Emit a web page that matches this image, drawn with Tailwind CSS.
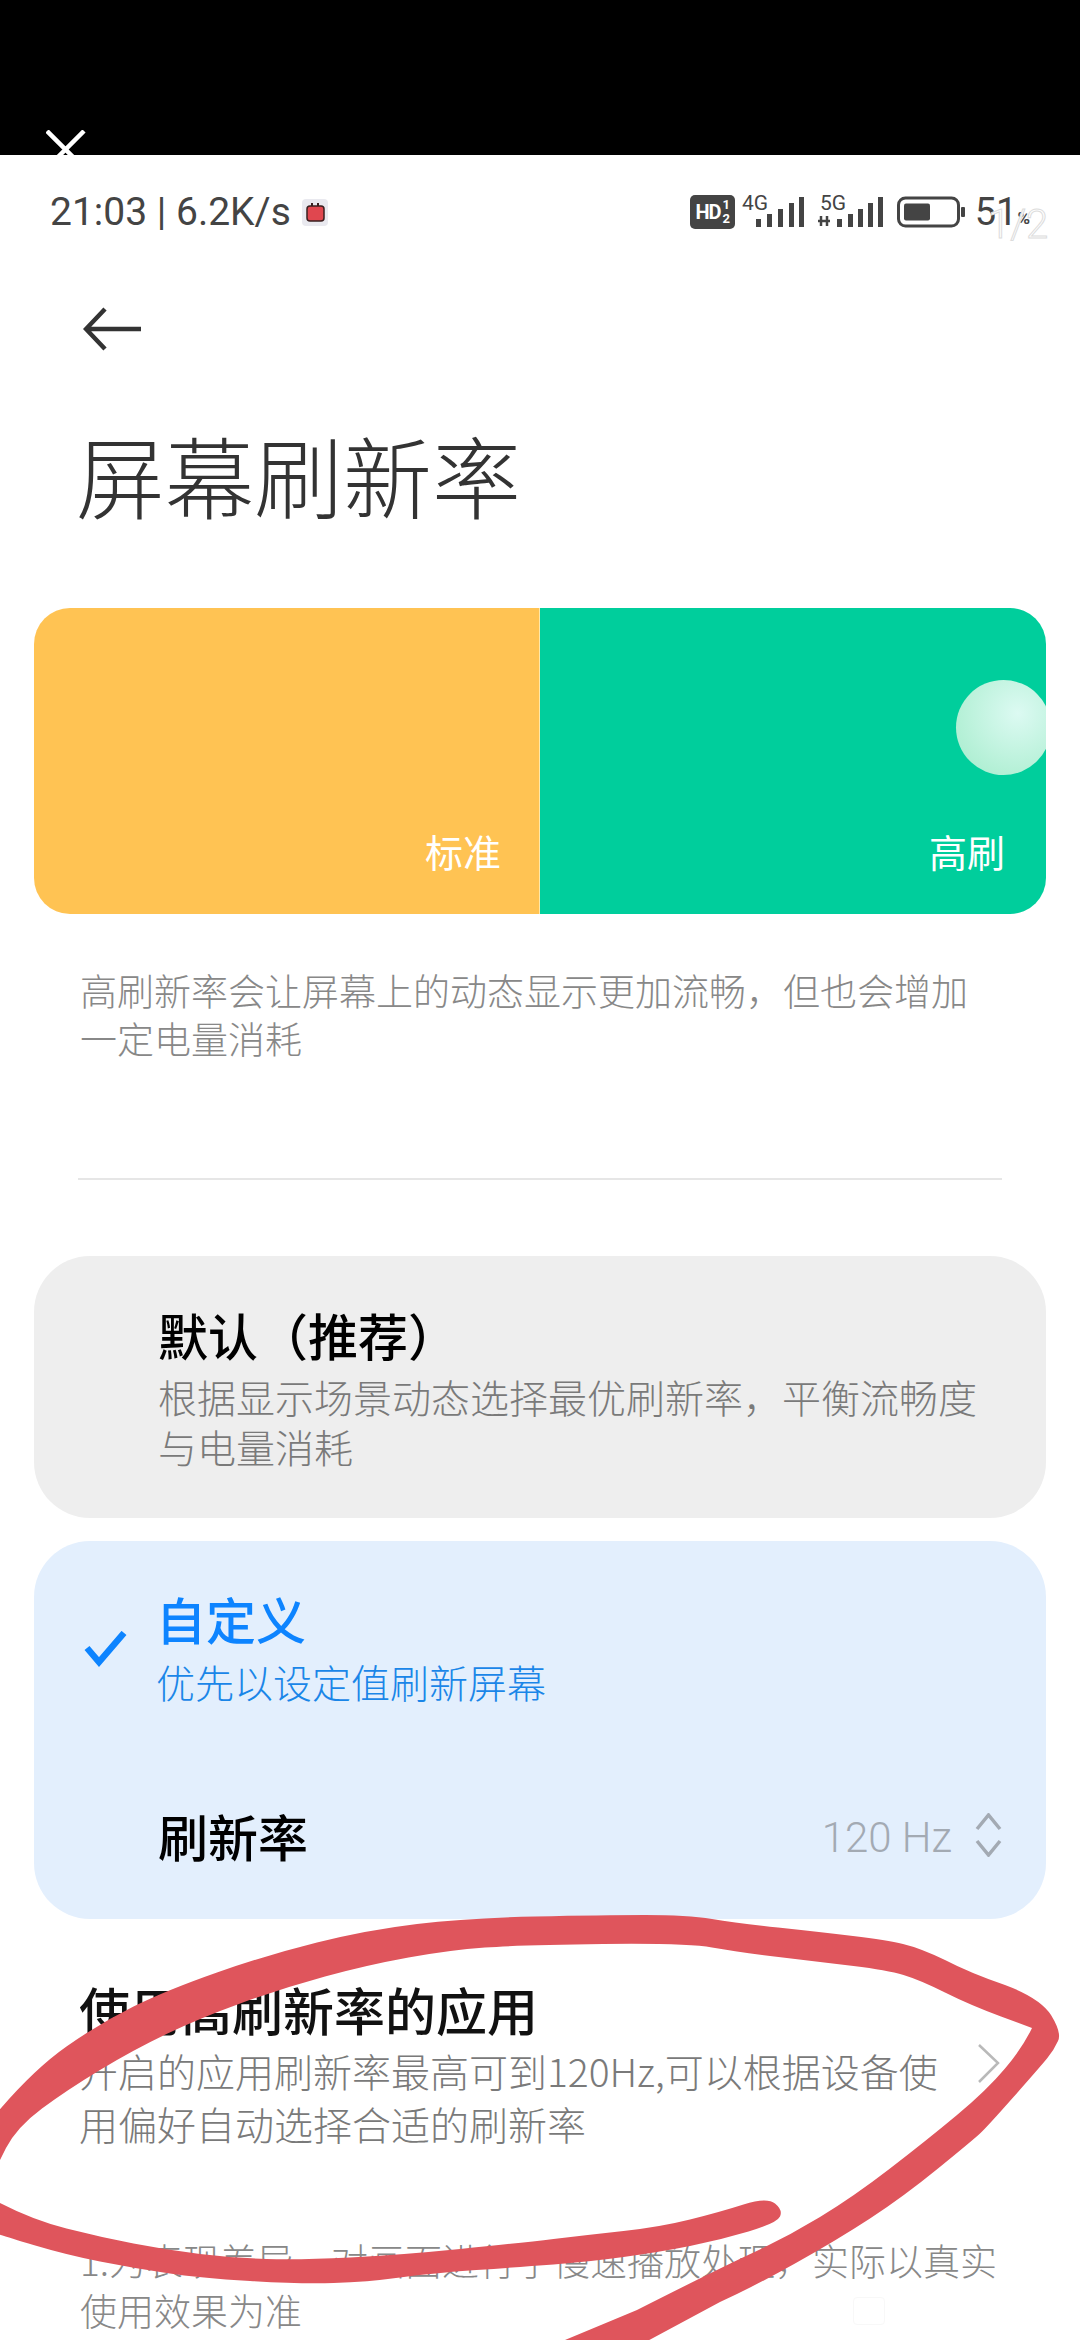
<!DOCTYPE html>
<html lang="zh-CN">
<head>
<meta charset="utf-8">
<script src="https://cdn.jsdelivr.net/npm/@tailwindcss/browser@4"></script>
</head>
<body class="m-0 bg-white">
<div class="relative w-[1080px] h-[2340px] overflow-hidden bg-white font-['Roboto','Noto_Sans_CJK_SC',sans-serif]">
  <!-- black top strip -->
  <div class="h-[155px] bg-black"></div>

  <!-- status bar -->
  <div class="h-[114px] flex items-center justify-between pl-[50px] pr-[50px] text-[#444]">
    <div class="flex items-center text-[39px] leading-none">
      <span>21:03 | 6.2K/s</span>
      <svg width="26" height="27" viewBox="0 0 26 27" class="ml-[11px]"><rect width="26" height="27" rx="4" fill="#e9e9ef"/><rect x="5" y="7" width="17" height="15" rx="3" fill="#e0474f" stroke="#3a2020" stroke-width="1.5"/><path d="M10 7V4M16 7V4" stroke="#3a2020" stroke-width="2"/></svg>
    </div>
    <div class="flex items-center">
      <div class="w-[45px] h-[34px] rounded-[5px] bg-[#444] text-white flex items-center justify-center text-[20px] font-bold leading-none tracking-[-1px]"><span>HD</span><span class="flex flex-col text-[13px] leading-[14px] ml-[2px]"><span>1</span><span>2</span></span></div>
      <svg width="62" height="36" viewBox="0 0 62 36" class="ml-[7px] overflow-visible" fill="#444"><text x="0" y="16" font-size="21" font-family="Roboto">4G</text><rect x="14" y="25" width="5" height="8"/><rect x="25" y="20" width="5" height="13"/><rect x="36" y="15" width="5" height="18"/><rect x="47" y="9" width="5" height="24"/><rect x="57" y="3" width="5" height="30"/></svg>
      <svg width="68" height="36" viewBox="0 0 68 36" class="ml-[13px] overflow-visible" fill="#444"><text x="3" y="16" font-size="21" font-family="Roboto">5G</text><path d="M1 27h12M4 22v10M10 22v10" stroke="#444" stroke-width="2.5"/><rect x="20" y="25" width="5" height="8"/><rect x="31" y="20" width="5" height="13"/><rect x="41" y="15" width="5" height="18"/><rect x="51" y="9" width="5" height="24"/><rect x="61" y="3" width="5" height="30"/></svg>
      <svg width="68" height="32" viewBox="0 0 68 32" class="ml-[12px]"><rect x="1.5" y="2" width="60" height="28" rx="7" fill="none" stroke="#444" stroke-width="3"/><rect x="7" y="7.5" width="26" height="17" rx="2" fill="#444"/><rect x="64" y="11" width="4" height="10" rx="1" fill="#444"/></svg>
      <span class="ml-[10px] text-[38px] leading-none">51</span><span class="text-[17px] leading-none self-end mb-[4px] font-bold">%</span>
    </div>
  </div>

  <!-- header -->
  <div class="h-[135px] pl-[83px] pt-[38px]">
    <svg width="60" height="44" viewBox="0 0 60 44" fill="none" stroke="#333" stroke-width="4.5"><path d="M58 22H3M22 2L3 22L22 42"/></svg>
  </div>
  <h1 class="m-0 pl-[76px] h-[139px] flex items-center text-[89px] leading-none font-light text-[#333] font-['Noto_Sans_CJK_SC',sans-serif]">屏幕刷新率</h1>

  <!-- preview -->
  <div class="relative mt-[65px] mx-[34px] h-[306px] rounded-[36px] overflow-hidden flex text-white text-[38px] leading-none font-['Noto_Sans_CJK_SC',sans-serif]">
    <div class="w-[506px] bg-[#ffc353] flex items-end justify-end pr-[38px] pb-[44px] border-r border-[#ffe7a8]"><span>标准</span></div>
    <div class="flex-1 bg-[#00ce9c] flex items-end justify-end pr-[41px] pb-[44px]"><span>高刷</span></div>
    <div class="absolute left-[922px] top-[72px] w-[95px] h-[95px] rounded-full bg-[radial-gradient(circle_at_65%_35%,#dcfaf2,#b4f0d6_70%,#a3ebce)]"></div>
  </div>

  <p class="m-0 mt-[52px] pl-[80px] pr-[100px] text-[37px] leading-[48px] text-[#888] font-['Noto_Sans_CJK_SC',sans-serif] font-light">高刷新率会让屏幕上的动态显示更加流畅，但也会增加一定电量消耗</p>

  <div class="mx-[78px] mt-[116px] h-[2px] bg-[#e6e6e6]"></div>

  <!-- option: default -->
  <div class="mx-[34px] mt-[76px] h-[262px] rounded-[56px] bg-[#eeeeee] pl-[124px] pr-[60px] pt-[51px] font-['Noto_Sans_CJK_SC',sans-serif]">
    <div class="text-[50px] leading-[54px] font-medium text-black">默认（推荐）</div>
    <div class="mt-[10px] text-[39px] leading-[50px] text-[#7a7a7a] font-light">根据显示场景动态选择最优刷新率，平衡流畅度与电量消耗</div>
  </div>

  <!-- option: custom -->
  <div class="mx-[34px] mt-[23px] h-[378px] rounded-[56px] bg-[#e3effd] pl-[50px] pr-[44px] pt-[50px] font-['Noto_Sans_CJK_SC',sans-serif]">
    <div class="flex items-center">
      <svg width="44" height="36" viewBox="0 0 44 36" fill="none" stroke="#0d84ff" stroke-width="6.5"><path d="M3 17L15 31L40 2"/></svg>
      <div class="ml-[28px]">
        <div class="text-[50px] leading-[54px] font-medium text-[#0d84ff]">自定义</div>
        <div class="mt-[10px] text-[39px] leading-[52px] text-[#1a86e8] font-light">优先以设定值刷新屏幕</div>
      </div>
    </div>
    <div class="mt-[101px] flex items-center justify-between pl-[74px]">
      <div class="text-[50px] leading-[54px] font-medium text-black">刷新率</div>
      <div class="flex items-center text-[#a3aab3]">
        <span class="pt-[6px] text-[42px] leading-none font-light font-['Roboto',sans-serif]">120 Hz</span>
        <svg width="27" height="44" viewBox="0 0 27 44" class="ml-[23px]" fill="none" stroke="#a3aab3" stroke-width="3.5"><path d="M2 16L13.5 2L25 16M2 28L13.5 42L25 28"/></svg>
      </div>
    </div>
  </div>

  <!-- apps row -->
  <div class="relative mt-[60px] pl-[79px] pr-[130px] font-['Noto_Sans_CJK_SC',sans-serif]">
    <div class="text-[51px] leading-[60px] font-medium text-[#111]">使用高刷新率的应用</div>
    <div class="mt-[5px] text-[39px] leading-[53px] text-[#7a7a7a] font-light">开启的应用刷新率最高可到120Hz,可以根据设备使用偏好自动选择合适的刷新率</div>
    <svg width="24" height="40" viewBox="0 0 24 40" class="absolute left-[977px] top-[65px]" fill="none" stroke="#b9b9b9" stroke-width="2.5"><path d="M2 1L21 19L2 38"/></svg>
  </div>

  <p class="m-0 mt-[85px] pl-[80px] pr-[80px] text-[37px] leading-[50px] text-[#888] font-['Noto_Sans_CJK_SC',sans-serif] font-light">1.为表现差异，对画面进行了慢速播放处理，实际以真实使用效果为准</p>

  <!-- overlays -->
  <svg class="absolute left-[46px] top-[130px]" width="40" height="25" viewBox="0 0 40 25" fill="none" stroke="#fff" stroke-width="4.5"><path d="M1 1L38 38M38 1L1 38"/></svg>
  <div class="absolute left-[988px] top-[205px] text-[40px] leading-none font-light text-white [-webkit-text-stroke:1px_#dcdcdc]">1/2</div>
  <div class="absolute left-[853px] top-[2297px] w-[32px] h-[28px] rounded-[4px] border border-[#f8f8f8]"></div>
  <svg class="absolute left-0 top-[1900px]" width="1080" height="440" viewBox="0 1900 1080 440">
    <path fill="#df555c" d="M-5 2115 Q33 2070 66.5 2046.5 Q100 2023 133.5 2006.5 Q167 1990 217 1972.5 Q267 1955 317 1942.5 Q367 1930 417 1924 Q467 1918 535 1916.5 Q603 1915 645 1915 Q687 1915 712 1919 Q737 1923 778 1927.5 Q820 1932 853 1936 Q887 1940 903 1944 Q920 1948 945 1960 Q970 1973 1005 1985 Q1040 1998 1051 2015 Q1062 2033 1058 2041 Q1054 2050 1047 2058.5 Q1040 2067 1013.5 2097 Q987 2127 980 2133.5 Q973 2140 938 2168.5 Q903 2197 870 2218.5 Q837 2240 795 2263.5 Q753 2287 720 2302 L640 2345 L553 2345 L637 2310 Q720 2268 753.5 2252.5 Q787 2237 820 2217 Q853 2197 890 2168.5 Q927 2140 957 2115 Q987 2090 1005 2068.5 Q1023 2047 1032 2028 L1001 2016.5 Q970 2005 945 1992.5 Q920 1980 903.5 1975 Q887 1970 853.5 1966 Q820 1962 778.5 1957 Q737 1952 712 1947.5 Q687 1943 603 1944 Q520 1945 485 1947.5 Q450 1950 408.5 1957.5 Q367 1965 325 1976.5 Q283 1988 241.5 2003 Q200 2018 166.5 2034 Q133 2050 100 2070 Q67 2090 42 2108.5 Q17 2127 6 2148 L-5 2170 Z"/>
    <path fill="#df555c" d="M-5 2200 L0 2203 Q33 2220 66.5 2228.5 Q100 2237 133.5 2243.5 Q167 2250 200 2254 Q233 2258 266.5 2259 Q300 2260 350 2257.5 Q400 2255 460 2249 Q520 2243 553.5 2239 Q587 2235 623.5 2231 Q660 2227 690 2219.5 Q720 2212 743.5 2204.5 Q767 2197 775 2203.5 Q783 2210 780 2216.5 Q777 2223 748.5 2231.5 Q720 2240 690 2246 Q660 2252 623.5 2257 Q587 2262 553.5 2264.5 Q520 2267 476.5 2270 Q433 2273 400 2277.5 Q367 2282 333.5 2283 Q300 2284 250 2281 Q200 2278 166.5 2273 Q133 2268 100 2261.5 Q67 2255 33.5 2245 Q0 2235 -5 2233 Z"/>
  </svg>
</div>
</body>
</html>
